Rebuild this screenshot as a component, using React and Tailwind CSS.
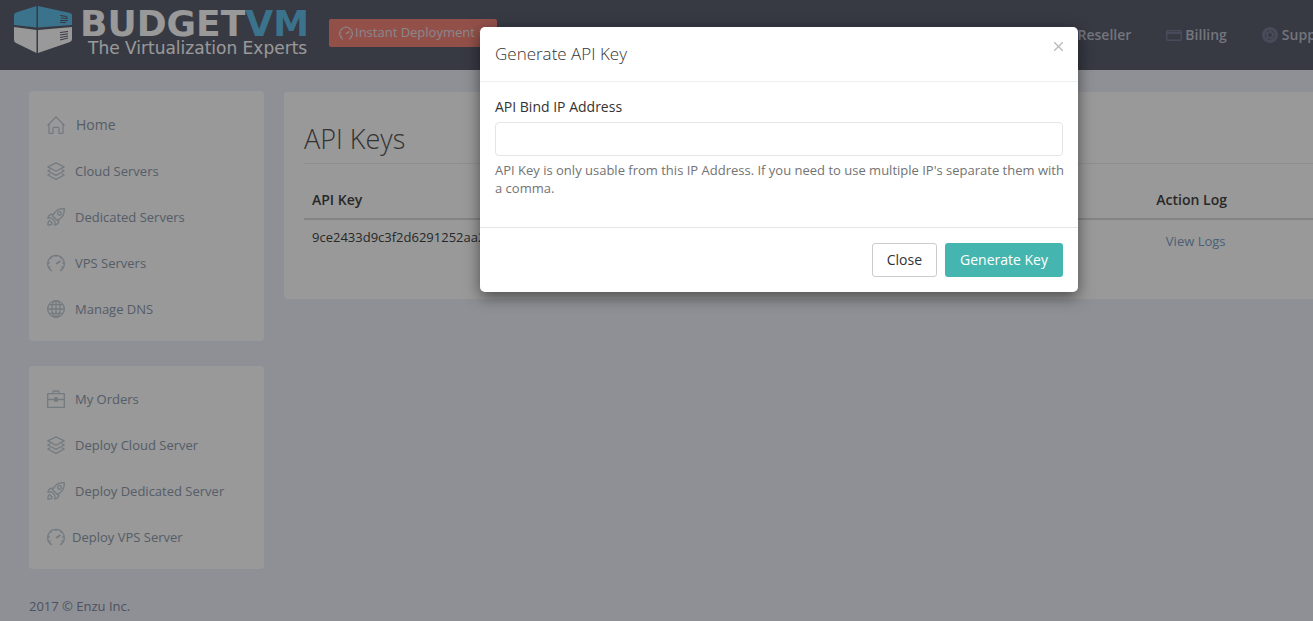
const icons = {
  home: <path d="M.5 9.500L9 .9l8.500 8.600M2 8.500v8.800h4v-5q0-1 1-1h4q1 0 1 1v5h4V8.500" />,
  layers: (
    <path d="M9 .8l8.200 4.100L9 9.300.8 4.900zM3.200 7.600L.8 9 9 13.300 17.200 9l-2.400-1.400M3.200 11.700L.8 13 9 17.300l8.200-4.300-2.400-1.300" />
  ),
  rocket: (
    <>
      <path d="M17.300.7c-4 0-7 .6-9 3.200L5.500 7.700l4.800 4.800 3.800-2.800c2.600-2 3.200-5 3.200-9z" />
      <path d="M6.500 6.300C3.500 5.800 1.600 7.400.8 10.200l3.700-.3M11.700 11.500c.5 3-1.100 4.900-3.900 5.700l.3-3.700M4.500 9.900l3.600 3.600M.8 17.200c0-2.500.4-4 1.700-4.700M.8 17.200c2.500 0 4-.4 4.700-1.700M2.500 12.500l3 3" />
      <circle cx="12.500" cy="5.500" r="1.800" />
    </>
  ),
  gauge: (
    <>
      <path d="M5 17A8.300 8.300 0 1 1 13 17" />
      <path d="M9 1v2M3.600 3.600l1 1M14.400 3.600l-1 1M1 9h1.800M15.200 9H17M2.300 13.500l1.500-.8M15.700 13.500l-1.500-.8" />
      <path d="M9 10l4.500-3" strokeWidth="1.800" />
    </>
  ),
  globe: (
    <>
      <circle cx="9" cy="9" r="8.300" />
      <ellipse cx="9" cy="9" rx="4.200" ry="8.300" />
      <path d="M9 .7v16.600M.7 9h16.600M2 4.700h14M2 13.300h14" />
    </>
  ),
  briefcase: (
    <>
      <path d="M.7 3.700h16.600v13.600H.7zM.7 9.500H7M11 9.500h6.300M6 3.700V2.200Q6 1 7.200 1h3.600Q12 1 12 2.200v1.500" />
      <rect x="7.500" y="7.700" width="3" height="3.600" rx="1" fill="currentColor" />
    </>
  ),
};

const serverLinks = [
  { label: 'Home', icon: 'home', className: 'gap-[11px] text-sm leading-[23px]' },
  { label: 'Cloud Servers', icon: 'layers', className: 'gap-2.5 text-[13px] leading-[22px]' },
  { label: 'Dedicated Servers', icon: 'rocket', className: 'gap-2.5 text-[13px] leading-[22px]' },
  { label: 'VPS Servers', icon: 'gauge', className: 'gap-2.5 text-[13px] leading-[22px]' },
  { label: 'Manage DNS', icon: 'globe', className: 'gap-2.5 text-[13px] leading-[22px]' },
];

const orderLinks = [
  { label: 'My Orders', icon: 'briefcase', className: 'gap-2.5 text-[13px] leading-[22px]' },
  { label: 'Deploy Cloud Server', icon: 'layers', className: 'gap-2.5 text-[13px] leading-[22px]' },
  { label: 'Deploy Dedicated Server', icon: 'rocket', className: 'gap-2.5 text-[13px] leading-[22px]' },
  { label: 'Deploy VPS Server', icon: 'gauge', className: 'gap-[7px] text-[13px] leading-[22px]' },
];

function Icon({ name, className }) {
  return (
    <svg
      viewBox="0 0 18 18"
      fill="none"
      stroke="currentColor"
      strokeWidth="1.300"
      strokeLinejoin="round"
      className={`shrink-0 ${className}`}
      aria-hidden="true"
    >
      {icons[name]}
    </svg>
  );
}

function Logo() {
  return (
    <a href="#" className="flex items-start gap-2">
      <svg viewBox="0 0 58 48" className="h-12 w-[58px]" aria-hidden="true">
        <path d="M0 9 Q0 7 2 6.500 L22.500 0 V21.500 L0 19 Z M24 0 L56 7 Q58 7.500 58 9 V19 L24 21.500 Z" fill="#62c0e8" />
        <path d="M0 21 L22.500 24 V47 L2 37 Q0 36 0 34 Z M24 24 L58 21 V33 Q58 35 56 36 L24 47 Z" fill="#fff" />
        <path
          d="M46 9.500 l7 1 v1 M47 12 l7 .5 M46 14.500 l8 0 M46 16.500 h6 M46 26.500 l8 -1 M46 29 l8 -1.200 M46 31.500 l8 -1.500 M46 34 l8 -2"
          stroke="#5c5f70"
          fill="none"
        />
      </svg>
      <span className="flex flex-col pt-0.5 whitespace-nowrap font-['DejaVu_Sans',sans-serif]">
        <span className="text-4xl leading-8 font-bold text-white">
          BUDGET<span className="text-[#62c0e8]">VM</span>
        </span>
        <span className="pl-2 text-[17px] leading-4 text-white">The Virtualization Experts</span>
      </span>
    </a>
  );
}

function SideMenu({ links }) {
  return (
    <nav className="rounded bg-white px-[18px] pt-2.5 pb-[9px]">
      {links.map(({ label, icon, className }) => (
        <a key={label} href="#" className={`flex items-center py-3 text-[#8e9bae] ${className}`}>
          <Icon name={icon} className="size-[18px] text-[#c0cdd6]" />
          {label}
        </a>
      ))}
    </nav>
  );
}

function BillingIcon() {
  return (
    <svg viewBox="0 0 16 12" className="h-3 w-4" aria-hidden="true">
      <rect x=".75" y="1.750" width="14.500" height="9.500" rx="1" fill="none" stroke="#7b7e97" strokeWidth="1.500" />
      <path d="M1 4h14" stroke="#7b7e97" strokeWidth="2" />
    </svg>
  );
}

function SupportIcon() {
  return (
    <svg viewBox="0 0 16 16" className="size-4" aria-hidden="true">
      <circle cx="8" cy="8" r="8" fill="#7b7e97" />
      <circle cx="8" cy="8" r="4.500" fill="none" stroke="#5c5f70" strokeDasharray="4 1.500" />
      <circle cx="8" cy="8" r="2" fill="#5c5f70" />
    </svg>
  );
}

function Header() {
  return (
    <header className="flex h-[70px] items-start bg-[#5c5f70] pr-[222px]">
      <div className="flex w-[329px] shrink-0 pt-1.5 pl-3.5">
        <Logo />
      </div>
      <button
        type="button"
        className="mt-[19px] flex h-7 w-[168px] items-center gap-0.5 rounded-xs bg-[#f3857a] px-2.5 text-[13px] whitespace-nowrap text-[#e8e0e8]"
      >
        <Icon name="gauge" className="size-3.5" />
        Instant Deployment
        <span className="ml-auto border-x-4 border-t-4 border-x-transparent" />
      </button>
      <nav className="ml-auto flex gap-[35px] pt-[25px] text-sm leading-5 font-semibold text-[#c0c3cf]">
        <a href="#">Reseller</a>
        <a href="#" className="flex items-center gap-[3px]">
          <BillingIcon />
          Billing
        </a>
        <a href="#" className="flex items-center gap-1">
          <SupportIcon />
          Support
        </a>
      </nav>
    </header>
  );
}

function ApiKeys() {
  return (
    <main className="mt-px flex-1 self-start rounded bg-white px-5 pt-7 pb-[37px]">
      <h1 className="border-b border-[#eee] pb-[5px] text-[27px] leading-[38px] font-light text-[#555]">API Keys</h1>
      <table className="mt-[17px] w-full table-fixed">
        <thead>
          <tr className="border-b-2 border-[#ddd] text-sm leading-5 text-[#444]">
            <th className="w-[64%] p-2 pt-[9px] text-left font-semibold">API Key</th>
            <th className="w-[19%] py-2 pt-[9px] pl-1 font-semibold">Action Log</th>
            <td className="w-[17%]" />
          </tr>
        </thead>
        <tbody>
          <tr className="text-[13px] leading-[18px] text-[#444]">
            <td className="p-2 align-top">9ce2433d9c3f2d6291252aa25</td>
            <td className="py-3 pl-3 text-center">
              <a href="#" className="text-[#7d9fc4]">View Logs</a>
            </td>
            <td />
          </tr>
        </tbody>
      </table>
    </main>
  );
}

function GenerateKeyModal() {
  return (
    <div className="absolute inset-0 flex items-start justify-center bg-black/40 pt-[27px]">
      <div
        role="dialog"
        aria-labelledby="modal-title"
        className="w-[598px] rounded-[5px] bg-white text-[#333] shadow-[0_5px_15px_rgba(0,0,0,0.5)]"
      >
        <div className="flex items-start justify-between border-b border-[#efefef] p-[15px]">
          <h2 id="modal-title" className="text-[17px] leading-6 font-light">Generate API Key</h2>
          <button type="button" aria-label="Close dialog" className="text-[#bbb]">
            <svg viewBox="0 0 9 9" className="size-[9px]" aria-hidden="true">
              <path d="M0 0l9 9M9 0L0 9" stroke="currentColor" strokeWidth="1.400" />
            </svg>
          </button>
        </div>
        <div className="p-[15px] pb-[30px]">
          <label htmlFor="bind-ip" className="mb-[5px] block text-sm leading-5">API Bind IP Address</label>
          <input
            id="bind-ip"
            type="text"
            className="block h-[34px] w-full rounded border border-[#e5e5e5] px-3 text-sm"
          />
          <p className="mt-[5px] text-[13px] leading-[18px] whitespace-nowrap text-[#737373]">
            API Key is only usable from this IP Address. If you need to use multiple IP's separate them with
            <br />
            a comma.
          </p>
        </div>
        <div className="flex justify-end gap-2 border-t border-[#e5e5e5] p-[15px] text-sm">
          <button type="button" className="h-[34px] rounded-[3px] border border-[#ccc] px-3.5">Close</button>
          <button type="button" className="h-[34px] rounded-[3px] bg-[#45b6af] px-[15px] text-white">Generate Key</button>
        </div>
      </div>
    </div>
  );
}

export default function App() {
  return (
    <div className="overflow-hidden font-['Open_Sans',sans-serif]">
      <div className="relative min-h-screen w-[calc(100%+245px)] bg-[#eef0f8]">
        <Header />
        <div className="flex gap-5 px-[29px] pt-[21px]">
          <aside className="flex w-[235px] shrink-0 flex-col gap-[25px]">
            <SideMenu links={serverLinks} />
            <SideMenu links={orderLinks} />
          </aside>
          <ApiKeys />
        </div>
        <footer className="px-[29px] pt-[27px] text-[13px] leading-5 text-[#8088a0]">2017 © Enzu Inc.</footer>
        <GenerateKeyModal />
      </div>
    </div>
  );
}
